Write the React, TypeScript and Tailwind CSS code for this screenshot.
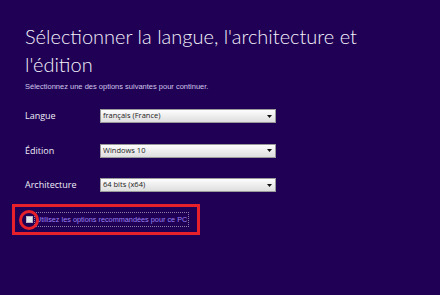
import React from 'react';

const rows = [
    { label: 'Langue', value: 'français (France)' },
    { label: 'Édition', value: 'Windows 10' },
    { label: 'Architecture', value: '64 bits (x64)' },
];

const Select: React.FC<{ value: string }> = ({ value }) => (
    <div className="w-[176px] h-[14px] flex items-center justify-between border border-[#9a9a9a] bg-gradient-to-b from-[#fdfdfd] to-[#dedede] px-[2px]">
        <span className="text-[7.5px] text-[#222] leading-none">{value}</span>
        <svg width="5" height="3" viewBox="0 0 5 3" className="mr-[1px]">
            <path d="M0 0h5L2.5 3z" fill="#111" />
        </svg>
    </div>
);

export default function App() {
    return (
        <div className="w-[440px] h-[295px] bg-[#1f0054] overflow-hidden font-['Open_Sans',sans-serif]">
            <div className="px-[25px] pt-[22px]">
                {/* Title */}
                <h1 className="text-[20px] font-light leading-[28px] text-[#f4f2fb] font-['Lato',sans-serif]">
                    Sélectionner la langue, l'architecture et<br />l'édition
                </h1>
                <p className="mt-[4px] text-[7.5px] leading-[10px] text-[#cfc6ea] font-['Liberation_Sans',sans-serif]">
                    Sélectionnez une des options suivantes pour continuer.
                </p>

                {/* Options */}
                <div className="mt-[17px] flex flex-col gap-[20.5px]">
                    {rows.map((row) => (
                        <div key={row.label} className="flex items-center h-[14px]">
                            <span className="w-[75px] text-[9px] text-[#f0eef8]">{row.label}</span>
                            <Select value={row.value} />
                        </div>
                    ))}
                </div>
            </div>

            {/* Recommended options (highlighted) */}
            <div className="relative ml-[12px] mt-[12px] w-[188px] h-[31px] border-[3px] border-[#e8202c] flex items-center pl-[11px]">
                <div className="w-[7px] h-[7px] bg-[#e6e6ea] border border-[#b8b8c4]" />
                <span className="ml-[1px] px-[1px] border border-dotted border-[#8a80a8] text-[7.3px] leading-[13px] text-[#9c82f2] font-['Liberation_Sans',sans-serif]">
                    Utilisez les options recommandées pour ce PC
                </span>
                <div className="absolute left-[4px] top-[3px] w-[20px] h-[20px] rounded-full border-[3px] border-[#e8202c]" />
            </div>
        </div>
    );
}
